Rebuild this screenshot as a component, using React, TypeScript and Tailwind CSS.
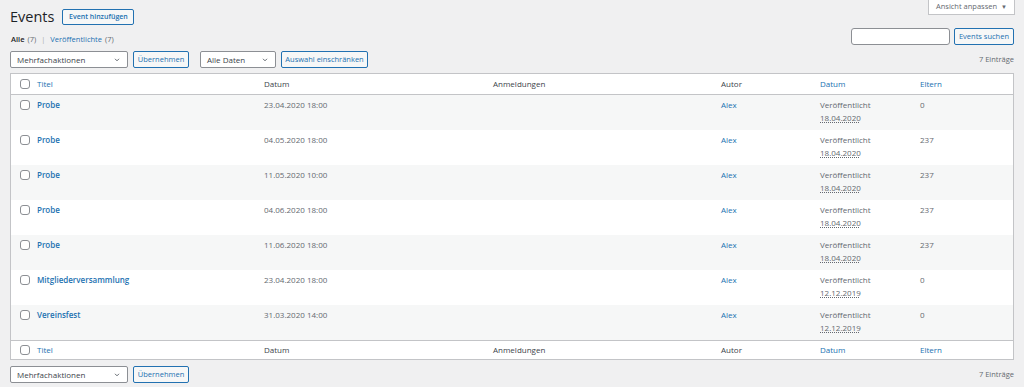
import React from "react";

const rows = [
  { title: "Probe", date: "23.04.2020 18:00", pub: "18.04.2020", parent: "0" },
  { title: "Probe", date: "04.05.2020 18:00", pub: "18.04.2020", parent: "237" },
  { title: "Probe", date: "11.05.2020 10:00", pub: "18.04.2020", parent: "237" },
  { title: "Probe", date: "04.06.2020 18:00", pub: "18.04.2020", parent: "237" },
  { title: "Probe", date: "11.06.2020 18:00", pub: "18.04.2020", parent: "237" },
  { title: "Mitgliederversammlung", date: "23.04.2020 18:00", pub: "12.12.2019", parent: "0" },
  { title: "Vereinsfest", date: "31.03.2020 14:00", pub: "12.12.2019", parent: "0" },
];

const cols = "grid grid-cols-[26px_227px_229px_228px_99px_100px_1fr]";

function Checkbox() {
  return <span className="block h-[10px] w-[10px] rounded-[3px] border border-[#8c8f94] bg-white" />;
}

function Chevron() {
  return (
    <svg width="8" height="8" viewBox="0 0 20 20" className="text-[#50575e]">
      <path d="M5 7l5 5 5-5" fill="none" stroke="currentColor" strokeWidth="2.2" />
    </svg>
  );
}

function Select({ label, width }: { label: string; width: string }) {
  return (
    <div className={`${width} flex h-[17px] items-center justify-between rounded-[2px] border border-[#8c8f94] bg-white pl-[6px] pr-[6px] text-[#3c434a]`}>
      <span>{label}</span>
      <Chevron />
    </div>
  );
}

function Button({ label, width }: { label: string; width: string }) {
  return (
    <div className={`${width} flex h-[17px] items-center justify-center rounded-[2px] border border-[#2271b1] bg-[#f6f7f7] text-[7.5px] text-[#2271b1]`}>
      {label}
    </div>
  );
}

function HeadRow({ border }: { border: string }) {
  return (
    <div className={`${cols} items-center ${border} border-[#c3c4c7] text-[#3c434a]`}>
      <div className="flex justify-center pl-[2px]">
        <Checkbox />
      </div>
      <div className="text-[#2271b1]">Titel</div>
      <div>Datum</div>
      <div>Anmeldungen</div>
      <div>Autor</div>
      <div className="text-[#2271b1]">Datum</div>
      <div className="text-[#2271b1]">Eltern</div>
    </div>
  );
}

export default function App() {
  return (
    <div
      className="relative min-h-screen bg-[#f0f0f1] px-[10px] text-[8px] text-[#3c434a]"
      style={{ fontFamily: "'Open Sans', 'Noto Sans', sans-serif" }}
    >
      <div className="absolute right-[9px] top-0 flex h-[15px] w-[87px] items-center justify-center gap-[4px] border border-t-0 border-[#c3c4c7] bg-white text-[7.5px] text-[#646970]">
        <span>Ansicht anpassen</span>
        <span className="text-[6px]">▼</span>
      </div>

      <div className="flex items-center pt-[9px]">
        <h1 className="text-[14.5px] leading-[16px] text-[#1d2327]">Events</h1>
        <div className="ml-[8px] flex h-[16px] w-[72px] items-center justify-center rounded-[2px] border border-[#2271b1] bg-[#f6f7f7] text-[7px] font-semibold text-[#2271b1]">
          Event hinzufügen
        </div>
      </div>

      <div className="mt-[3px] flex items-end justify-between">
        <div className="flex h-[10px] items-center pl-px text-[7.5px] text-[#646970]">
          <span className="font-semibold text-[#1d2327]">Alle</span>
          <span className="ml-[3px]">(7)</span>
          <span className="mx-[5px] text-[#a7aaad]">|</span>
          <span className="text-[#2271b1]">Veröffentlichte</span>
          <span className="ml-[3px]">(7)</span>
        </div>
        <div className="flex items-center gap-[4px]">
          <div className="h-[17px] w-[99px] rounded-[3px] border border-[#8c8f94] bg-white" />
          <Button label="Events suchen" width="w-[60px]" />
        </div>
      </div>

      <div className="mt-[6px] flex items-center">
        <Select label="Mehrfachaktionen" width="w-[118px]" />
        <div className="ml-[5px]">
          <Button label="Übernehmen" width="w-[56px]" />
        </div>
        <div className="ml-[11px]">
          <Select label="Alle Daten" width="w-[76px]" />
        </div>
        <div className="ml-[5px]">
          <Button label="Auswahl einschränken" width="w-[87px]" />
        </div>
        <div className="ml-auto text-[7.5px] text-[#646970]">7 Einträge</div>
      </div>

      <div className="mt-[5px] border border-[#c3c4c7] bg-white">
        <div className="h-[21px]">
          <HeadRow border="h-full border-b" />
        </div>
        {rows.map((r, i) => (
          <div
            key={i}
            className={`${cols} h-[35px] items-start pt-[3px] leading-[13px] text-[#646970] ${i % 2 === 0 ? "bg-[#f6f7f7]" : "bg-white"}`}
          >
            <div className="flex justify-center pl-[2px] pt-[2px]">
              <Checkbox />
            </div>
            <div className="font-semibold text-[#2271b1]">{r.title}</div>
            <div>{r.date}</div>
            <div />
            <div className="text-[#2271b1]">Alex</div>
            <div>
              <div>Veröffentlicht</div>
              <div>
                <span className="underline decoration-dotted underline-offset-[1px]">{r.pub}</span>
              </div>
            </div>
            <div>{r.parent}</div>
          </div>
        ))}
        <div className="h-[19px]">
          <HeadRow border="h-full border-t" />
        </div>
      </div>

      <div className="mt-[6px] flex items-center">
        <Select label="Mehrfachaktionen" width="w-[118px]" />
        <div className="ml-[5px]">
          <Button label="Übernehmen" width="w-[56px]" />
        </div>
        <div className="ml-auto text-[7.5px] text-[#646970]">7 Einträge</div>
      </div>
    </div>
  );
}
